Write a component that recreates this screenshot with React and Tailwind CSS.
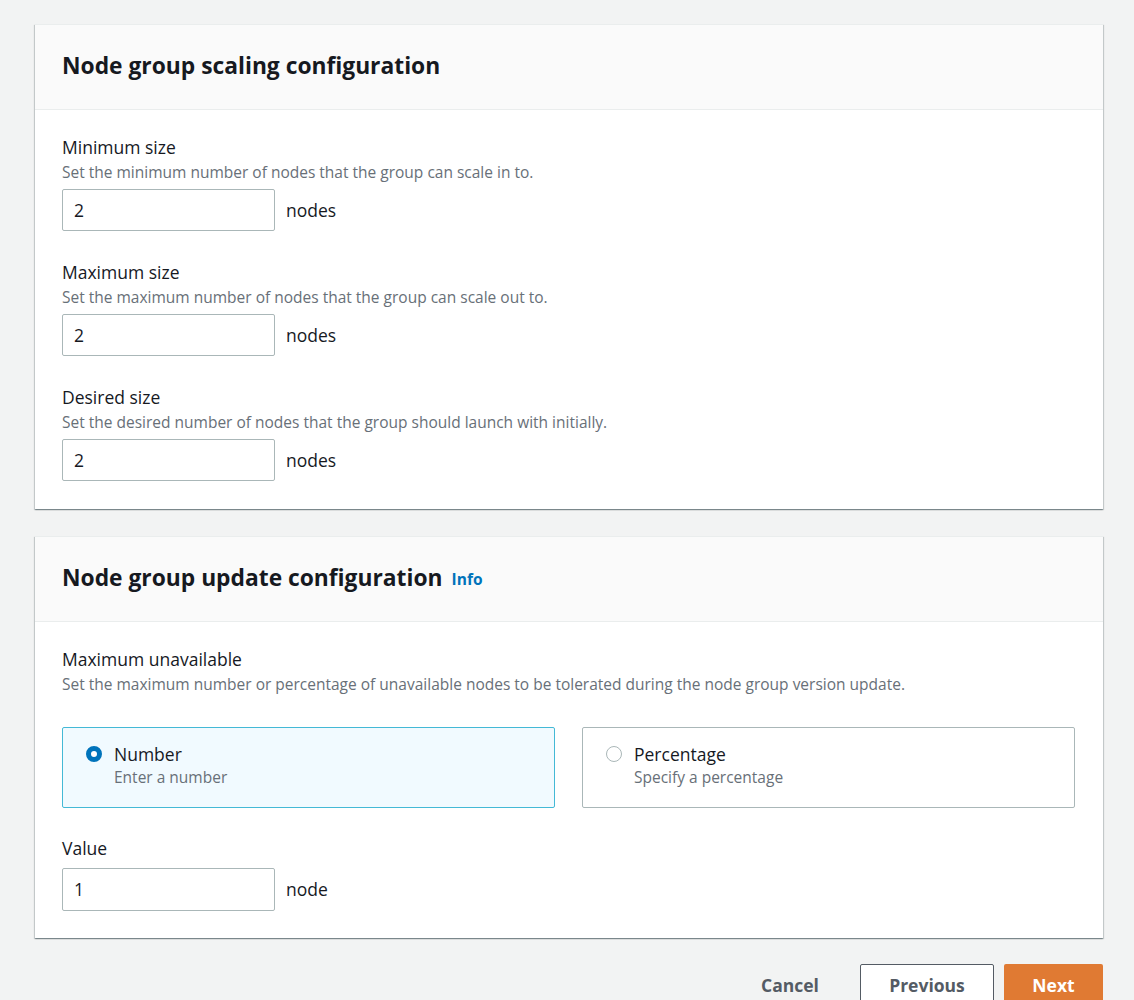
const font = { fontFamily: '"Open Sans", "Noto Sans", sans-serif' };

function Field({ label, description, value, unit }) {
  return (
    <div>
      <div className="text-[17.5px] leading-[22px] text-[#16191f]">{label}</div>
      {description && (
        <div className="mt-[4px] text-[15.5px] leading-[20px] text-[#687078]">{description}</div>
      )}
      <div className="mt-[7px] flex items-center">
        <div className="w-[213px] h-[42px] border border-[#aab7b8] rounded-[2px] bg-white flex items-center px-[11px] text-[17.5px] text-[#16191f]">
          {value}
        </div>
        <span className="ml-[11px] text-[17.5px] text-[#16191f]">{unit}</span>
      </div>
    </div>
  );
}

function Card({ title, info, bottom, children }) {
  return (
    <div className="bg-white border-t border-[#eaeded] shadow-[0_1px_1px_0_rgba(0,28,36,0.3),1px_1px_1px_0_rgba(0,28,36,0.15),-1px_1px_1px_0_rgba(0,28,36,0.15)]">
      <div className="h-[85px] bg-[#fafafa] border-b border-[#eaeded] px-[27px] pb-[2px] flex items-center">
        <h2 className="text-[22.8px] font-bold text-[#16191f]">{title}</h2>
        {info && <span className="ml-[9px] mt-[3px] text-[15.5px] font-bold text-[#0073bb]">Info</span>}
      </div>
      <div className={bottom ? "px-[27px] pt-[26px] pb-[27px]" : "px-[27px] pt-[26px] pb-[28px]"}>{children}</div>
    </div>
  );
}

function RadioTile({ selected, title, description }) {
  return (
    <div
      className={
        selected
          ? "flex-1 h-[81px] border border-[#44b9d6] bg-[#f1faff] rounded-[2px] px-[23px] pt-[15px] flex"
          : "flex-1 h-[81px] border border-[#aab7b8] bg-white rounded-[2px] px-[23px] pt-[15px] flex"
      }
    >
      <div className="pt-[3px]">
        {selected ? (
          <div className="w-[16px] h-[16px] rounded-full border-[5px] border-[#0073bb] bg-white" />
        ) : (
          <div className="w-[16px] h-[16px] rounded-full border border-[#aab7b8] bg-white" />
        )}
      </div>
      <div className="ml-[12px]">
        <div className="text-[17.5px] leading-[22px] text-[#16191f]">{title}</div>
        <div className="mt-[2px] text-[15.5px] leading-[20px] text-[#687078]">{description}</div>
      </div>
    </div>
  );
}

export default function App() {
  return (
    <div style={font} className="min-h-[1000px] bg-[#f2f3f3] pt-[24px] overflow-hidden">
      <div className="ml-[35px] w-[1068px]">
        <Card title="Node group scaling configuration">
          <div className="flex flex-col gap-[30px]">
            <Field
              label="Minimum size"
              description="Set the minimum number of nodes that the group can scale in to."
              value="2"
              unit="nodes"
            />
            <Field
              label="Maximum size"
              description="Set the maximum number of nodes that the group can scale out to."
              value="2"
              unit="nodes"
            />
            <Field
              label="Desired size"
              description="Set the desired number of nodes that the group should launch with initially."
              value="2"
              unit="nodes"
            />
          </div>
        </Card>

        <div className="h-[27px]" />

        <Card title="Node group update configuration" info bottom>
          <div className="text-[17.5px] leading-[22px] text-[#16191f]">Maximum unavailable</div>
          <div className="mt-[4px] text-[15.5px] leading-[20px] text-[#687078]">
            Set the maximum number or percentage of unavailable nodes to be tolerated during the node group version update.
          </div>
          <div className="mt-[33px] flex gap-[27px] w-[1013px]">
            <RadioTile selected title="Number" description="Enter a number" />
            <RadioTile title="Percentage" description="Specify a percentage" />
          </div>
          <div className="mt-[29px]">
            <div className="text-[17.5px] leading-[22px] text-[#16191f]">Value</div>
            <div className="mt-[9px] flex items-center">
              <div className="w-[213px] h-[43px] border border-[#aab7b8] rounded-[2px] bg-white flex items-center px-[11px] text-[17.5px] text-[#16191f]">
                1
              </div>
              <span className="ml-[11px] text-[17.5px] text-[#16191f]">node</span>
            </div>
          </div>
        </Card>

        <div className="mt-[26px] flex justify-end items-center gap-[10px]">
          <button className="w-[100px] h-[42px] text-[17.5px] font-bold text-[#545b64] mr-[10px]">Cancel</button>
          <button className="w-[134px] h-[42px] border border-[#545b64] rounded-[2px] bg-white text-[17.5px] font-bold text-[#545b64]">
            Previous
          </button>
          <button className="w-[99px] h-[42px] rounded-[2px] bg-[#e07a33] text-[17.5px] font-bold text-white">
            Next
          </button>
        </div>
      </div>
    </div>
  );
}
